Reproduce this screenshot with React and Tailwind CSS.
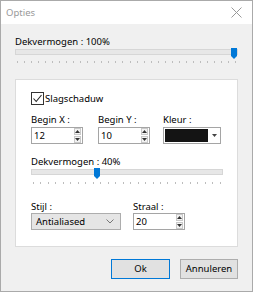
const FONT = { fontFamily: '"Noto Sans", "Open Sans", sans-serif' };

function Ticks({ count, className }) {
  return (
    <div className={`flex justify-between h-[2px] ${className}`}>
      {Array.from({ length: count }).map((_, i) => (
        <div key={i} className="w-px h-[2px] bg-[#bdbdbd]" />
      ))}
    </div>
  );
}

function Thumb({ className }) {
  return (
    <svg className={`absolute ${className}`} width="6" height="11" viewBox="0 0 6 11">
      <path d="M0 0H6V8L3 11L0 8Z" fill="#0078d7" />
    </svg>
  );
}

function Spin() {
  return (
    <div className="flex flex-col gap-px mr-[1px]">
      <div className="w-[7px] h-[7px] border border-[#c9c9c9] bg-[#f3f3f3] flex items-center justify-center">
        <svg width="5" height="3" viewBox="0 0 5 3"><path d="M2.5 0L5 3H0Z" fill="#333" /></svg>
      </div>
      <div className="w-[7px] h-[7px] border border-[#c9c9c9] bg-[#f3f3f3] flex items-center justify-center">
        <svg width="5" height="3" viewBox="0 0 5 3"><path d="M0 0H5L2.5 3Z" fill="#333" /></svg>
      </div>
    </div>
  );
}

function NumberField({ label, value, className = '' }) {
  return (
    <div className={className}>
      <div className="leading-[14px] h-[14px]">{label}</div>
      <div className="w-[52px] h-[17px] border border-[#a5a5a5] bg-white flex items-center justify-between pl-[2px]">
        <span className="leading-[15px]">{value}</span>
        <Spin />
      </div>
    </div>
  );
}

export default function App() {
  return (
    <div className="w-[253px] h-[292px] border border-[#aaaaaa] bg-[#f0f0f0] flex flex-col text-[9.5px] text-black" style={FONT}>
      {/* Title bar */}
      <div className="h-[23px] bg-white flex items-center justify-between pl-[5px] pr-[10px] shrink-0">
        <span className="text-[#999999] leading-[14px]">Opties</span>
        <svg width="11" height="11" viewBox="0 0 11 11">
          <path d="M0.5 0.5L10.5 10.5M10.5 0.5L0.5 10.5" stroke="#999" strokeWidth="1" />
        </svg>
      </div>

      <div className="px-[14px] flex flex-col">
        <div className="mt-[11px] leading-[14px] h-[14px]">Dekvermogen : 100%</div>
        <div className="relative h-[6px] border border-[#d6d6d6] bg-[#e7e7e7]">
          <Thumb className="right-0 top-[-2px]" />
        </div>
        <Ticks count={32} className="mt-[6px] px-[2px]" />

        {/* Group panel */}
        <div className="mt-[16px] h-[168px] bg-white border border-[#dcdcdc] pl-[15px] pt-[12px]">
          <div className="flex items-center h-[13px]">
            <div className="w-[13px] h-[13px] border border-[#333333] bg-white flex items-center justify-center">
              <svg width="11" height="11" viewBox="0 0 11 11">
                <path d="M1.5 5.5L4.2 8.5L9.5 2" stroke="#222" strokeWidth="1.1" fill="none" />
              </svg>
            </div>
            <span className="ml-[1px] leading-[14px]">Slagschaduw</span>
          </div>

          <div className="flex mt-[8px]">
            <NumberField label="Begin X :" value="12" />
            <NumberField label="Begin Y :" value="10" className="ml-[15px]" />
            <div className="ml-[13px]">
              <div className="leading-[14px] h-[14px]">Kleur :</div>
              <div className="w-[58px] h-[17px] border border-[#a5a5a5] bg-white flex items-center pl-[1px]">
                <div className="w-[43px] h-[13px] bg-[#141414]" />
                <div className="flex-1 flex items-center justify-center">
                  <svg width="5" height="3" viewBox="0 0 5 3"><path d="M0 0H5L2.5 3Z" fill="#444" /></svg>
                </div>
              </div>
            </div>
          </div>

          <div className="mt-[11px] leading-[14px] h-[14px]">Dekvermogen : 40%</div>
          <div className="relative w-[192px] h-[6px] border border-[#d6d6d6] bg-[#e7e7e7]">
            <Thumb className="left-[62px] top-[-2px]" />
          </div>
          <Ticks count={26} className="mt-[7px] w-[192px] px-[2px]" />

          <div className="flex mt-[16px]">
            <div>
              <div className="leading-[13px] h-[13px]">Stijl :</div>
              <div className="w-[90px] h-[17px] border border-[#adadad] bg-[#e5e5e5] flex items-center justify-between pl-[4px] pr-[6px]">
                <span className="leading-[15px]">Antialiased</span>
                <svg width="8" height="5" viewBox="0 0 8 5">
                  <path d="M0.5 0.5L4 4L7.5 0.5" stroke="#777" strokeWidth="1" fill="none" />
                </svg>
              </div>
            </div>
            <div className="ml-[12px]">
              <div className="leading-[13px] h-[13px]">Straal :</div>
              <div className="w-[52px] h-[17px] border border-[#a5a5a5] bg-white flex items-center justify-between pl-[2px]">
                <span className="leading-[15px]">20</span>
                <Spin />
              </div>
            </div>
          </div>
        </div>

        {/* Buttons */}
        <div className="flex justify-end gap-[10px] mt-[12px]">
          <button className="w-[59px] h-[20px] border border-[#0078d7] bg-[#e1e1e1] leading-[16px]">Ok</button>
          <button className="w-[58px] h-[20px] border border-[#adadad] bg-[#e1e1e1] leading-[16px]">Annuleren</button>
        </div>
      </div>
    </div>
  );
}
